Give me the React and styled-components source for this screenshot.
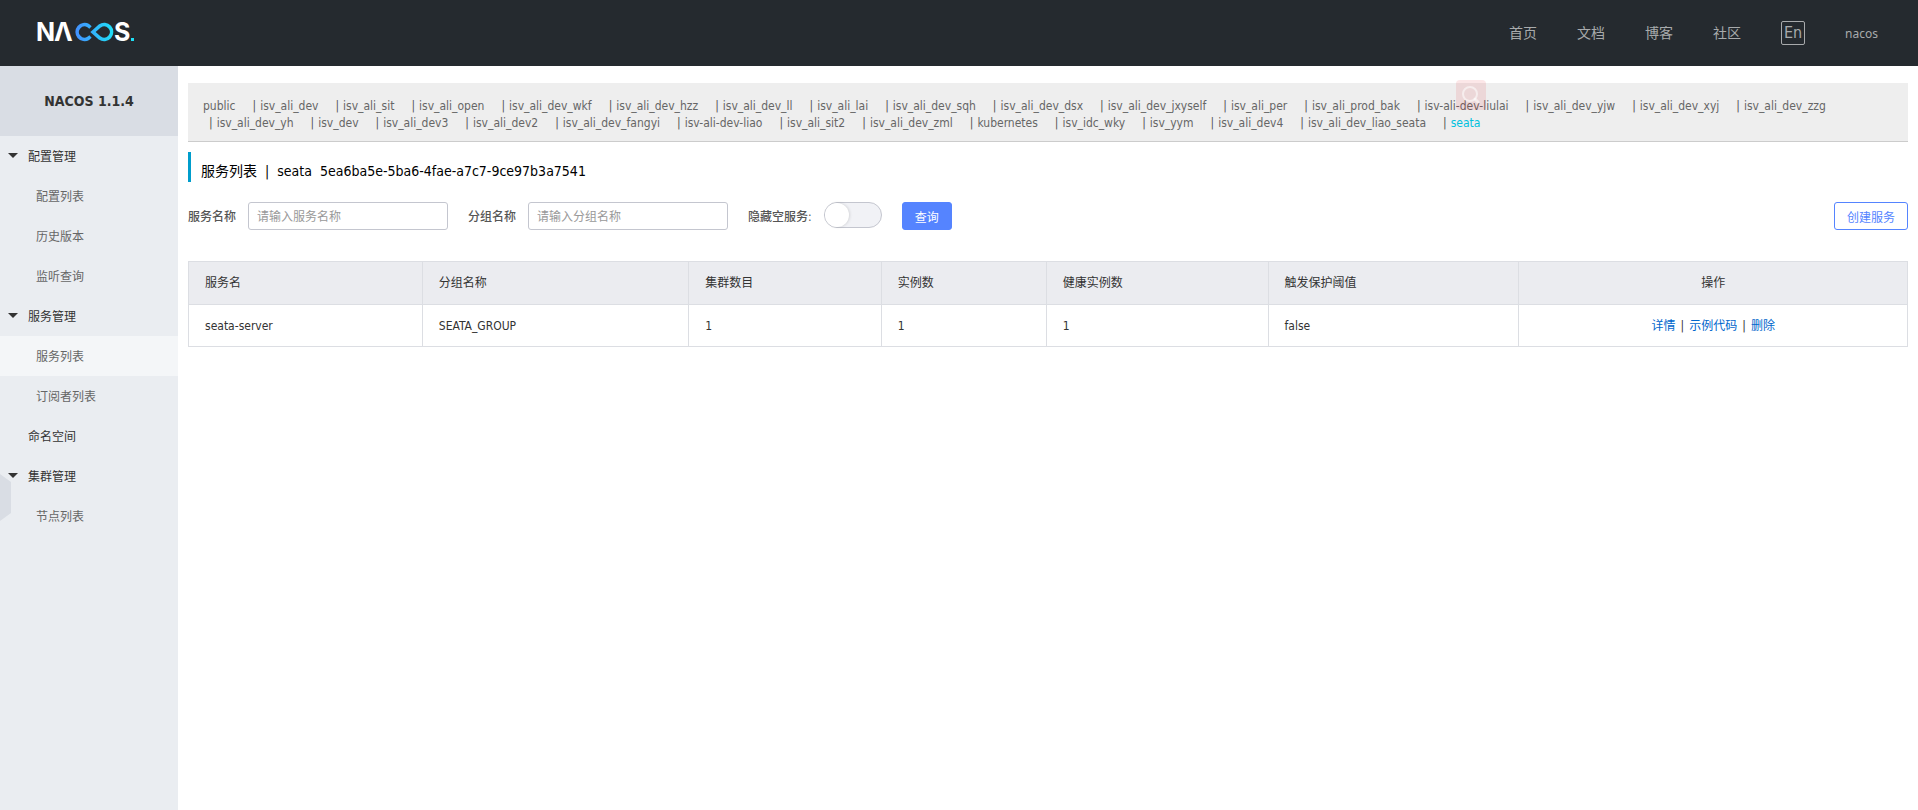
import React, { useState } from 'react'
import styled, { createGlobalStyle } from 'styled-components'

const GlobalStyle = createGlobalStyle`
  * {
    box-sizing: border-box;
  }
  body {
    margin: 0;
    background: #fff;
    color: #333;
    font-family: "DejaVu Sans Condensed", "Noto Sans CJK SC", sans-serif;
    font-size: 12px;
    line-height: 18px;
  }
  a {
    text-decoration: none;
  }
  button, input {
    font-family: inherit;
    font-size: 12px;
  }
`

const Page = styled.div`
  min-height: 100vh;
  display: flex;
  flex-direction: column;
`

const Header = styled.header`
  height: 66px;
  background: #252a2f;
  display: flex;
  align-items: center;
  justify-content: space-between;
  padding: 0 20px 0 32px;
`

const LogoLink = styled.a`
  display: block;
  svg {
    display: block;
  }
  text {
    font-family: Inter, sans-serif;
    font-size: 25px;
    font-weight: 700;
    fill: #fff;
  }
`

const TopNav = styled.nav`
  display: flex;
  align-items: center;
`

const TopLink = styled.a`
  padding: 0 20px;
  font-family: "Noto Sans", "Noto Sans CJK SC", sans-serif;
  font-size: ${p => (p.$small ? 12 : 14)}px;
  line-height: ${p => (p.$small ? 18 : 20)}px;
  padding-top: ${p => (p.$small ? 2 : 0)}px;
  color: #a8aaac;
`

const LangButton = styled.button`
  width: 24px;
  height: 24px;
  margin: 0 20px;
  padding: 0;
  border: 1px solid #a8aaac;
  border-radius: 2px;
  background: none;
  color: #a8aaac;
  font-size: 16px;
  line-height: 20px;
`

const Body = styled.div`
  flex: 1;
  display: flex;
`

const Sidebar = styled.aside`
  position: relative;
  flex: 0 0 178px;
  background: #eaedf1;
`

const Version = styled.h1`
  margin: 0;
  background: #d9dde4;
  font-size: 14px;
  line-height: 70px;
  text-align: center;
`

const Menu = styled.ul`
  list-style: none;
  margin: 0;
  padding: 0;
`

const MenuGroup = styled.button`
  display: flex;
  align-items: center;
  gap: 10px;
  width: 100%;
  height: 40px;
  padding: 0 8px 2px;
  border: 0;
  background: none;
  color: #333;
  text-align: left;
  &::before {
    content: '';
    border: 5px solid transparent;
    border-bottom-width: 0;
    border-top-color: ${p => (p.$leaf ? 'transparent' : '#333')};
  }
`

const MenuLink = styled.a`
  display: block;
  height: 40px;
  padding-left: 36px;
  line-height: 42px;
  color: #666;
  background: ${p => (p.$active ? '#f4f6f8' : 'transparent')};
`

// tab hanging on the window edge that folds the sidebar
const FoldHandle = styled.button`
  position: absolute;
  left: 0;
  top: 408px;
  width: 11px;
  height: 47px;
  padding: 0;
  border: 0;
  background: #d9dde4;
  clip-path: polygon(0 0, 100% 8px, 100% 39px, 0 100%);
`

const Main = styled.main`
  flex: 1;
  min-width: 0;
  padding: 17px 10px;
`

const Namespaces = styled.nav`
  position: relative;
  display: flex;
  flex-wrap: wrap;
  padding: 15px 15px 9px;
  background: #eee;
  border-bottom: 1px solid #ccc;
  line-height: 17px;
`

const Namespace = styled.span`
  margin-right: 11px;
  color: #555;
  white-space: nowrap;
  a {
    color: ${p => (p.$active ? '#00c1de' : '#666')};
  }
`

const Bar = styled.span`
  padding: 0 4px 0 6px;
`

const SearchBadge = styled.div`
  position: absolute;
  top: -3px;
  right: 422px;
  width: 30px;
  height: 30px;
  border-radius: 4px;
  background: rgba(230, 20, 30, 0.1);
  pointer-events: none;
`

const Title = styled.h2`
  display: flex;
  gap: 8px;
  margin: 10px 0 20px;
  padding: 8px 0 0 10px;
  border-left: 3px solid #009dcc;
  color: #000;
  font-size: 14px;
  font-weight: normal;
  line-height: 22px;
`

const Form = styled.form`
  display: flex;
  gap: 20px;
  margin-bottom: 31px;
`

const Field = styled.div`
  display: flex;
  gap: 12px;
  height: 28px;
  line-height: 30px;
  label {
    color: #555;
    font-weight: 500;
  }
`

const TextInput = styled.input`
  width: 200px;
  height: 28px;
  padding: 2px 8px 0;
  border: 1px solid #c4c6cf;
  border-radius: 3px;
  color: #333;
  &::placeholder {
    color: #999;
  }
`

const Switch = styled.input`
  appearance: none;
  width: 58px;
  height: 26px;
  margin: 0;
  border: 1px solid #c4c6cf;
  border-radius: 13px;
  background: ${p => (p.checked ? '#5584ff' : '#f1f2f6')};
  &::before {
    content: '';
    display: block;
    width: 24px;
    height: 24px;
    margin-left: ${p => (p.checked ? 32 : 0)}px;
    border-radius: 50%;
    background: #fff;
    box-shadow: 1px 0 3px rgba(0, 0, 0, 0.12);
  }
`

const Button = styled.button`
  height: 28px;
  padding: 0 12px;
  border: 1px solid #5584ff;
  border-radius: 3px;
  background: ${p => (p.$primary ? '#5584ff' : '#fff')};
  color: ${p => (p.$primary ? '#fff' : '#5584ff')};
`

const CreateButton = styled(Button)`
  margin-left: auto;
`

const Table = styled.table`
  width: 100%;
  table-layout: fixed;
  border-collapse: collapse;
  th, td {
    padding: 12px 16px;
    border: 1px solid #dcdee3;
    text-align: left;
    font-weight: normal;
  }
  th {
    background: #ebecf0;
  }
  td {
    padding-bottom: 11px;
  }
  th:last-child, td:last-child {
    text-align: center;
  }
  td a {
    color: #06c;
  }
`

const Col = styled.col`
  width: ${p => p.$width};
`

const Divider = styled.span`
  margin: 0 5px;
`

const menu = [
  { name: '配置管理', children: ['配置列表', '历史版本', '监听查询'] },
  { name: '服务管理', children: ['服务列表', '订阅者列表'] },
  { name: '命名空间', children: [] },
  { name: '集群管理', children: ['节点列表'] },
]

const namespaces = [
  'public', 'isv_ali_dev', 'isv_ali_sit', 'isv_ali_open', 'isv_ali_dev_wkf', 'isv_ali_dev_hzz',
  'isv_ali_dev_ll', 'isv_ali_lai', 'isv_ali_dev_sqh', 'isv_ali_dev_dsx', 'isv_ali_dev_jxyself',
  'isv_ali_per', 'isv_ali_prod_bak', 'isv-ali-dev-liulai', 'isv_ali_dev_yjw', 'isv_ali_dev_xyj',
  'isv_ali_dev_zzg', 'isv_ali_dev_yh', 'isv_dev', 'isv_ali_dev3', 'isv_ali_dev2',
  'isv_ali_dev_fangyi', 'isv-ali-dev-liao', 'isv_ali_sit2', 'isv_ali_dev_zml', 'kubernetes',
  'isv_idc_wky', 'isv_yym', 'isv_ali_dev4', 'isv_ali_dev_liao_seata', 'seata',
]

const columns = [
  { title: '服务名', width: '13.6%' },
  { title: '分组名称', width: '15.5%' },
  { title: '集群数目', width: '11.2%' },
  { title: '实例数', width: '9.6%' },
  { title: '健康实例数', width: '12.9%' },
  { title: '触发保护阈值', width: '14.6%' },
  { title: '操作', width: '22.6%' },
]

const services = [
  { name: 'seata-server', group: 'SEATA_GROUP', clusters: 1, instances: 1, healthy: 1, protect: 'false' },
]

const Logo = () => (
  <LogoLink href="#" aria-label="NACOS">
    <svg width="108" height="40" viewBox="0 0 108 40">
      <defs>
        <linearGradient id="loop" gradientUnits="userSpaceOnUse" x1="41" y1="0" x2="82" y2="0">
          <stop offset="0" stopColor="#468bff" />
          <stop offset="1" stopColor="#1ee0f7" />
        </linearGradient>
      </defs>
      <text x="4" y="28">N</text>
      <text x="22" y="28">Λ</text>
      <g fill="none" stroke="url(#loop)" strokeWidth="3.6">
        <path d="M58.5 14.5 L56.3 12.6 A7.4 7.4 0 1 0 56.3 25.4 L58.5 23.5" />
        <path d="M61 19 L67.8 13 A7.4 7.4 0 1 1 67.8 25 Z" />
      </g>
      <text x="82" y="28">S</text>
      <rect x="99" y="25" width="3" height="3" fill="#1ee0f7" />
    </svg>
  </LogoLink>
)

const SideMenu = () => (
  <Sidebar>
    <Version>NACOS 1.1.4</Version>
    <Menu>
      {menu.map(group => (
        <li key={group.name}>
          <MenuGroup type="button" $leaf={!group.children.length}>{group.name}</MenuGroup>
          {group.children.map(item => (
            <MenuLink key={item} href="#" $active={item === '服务列表'}>{item}</MenuLink>
          ))}
        </li>
      ))}
    </Menu>
    <FoldHandle type="button" aria-label="收起菜单" />
  </Sidebar>
)

const NamespaceList = () => (
  <Namespaces>
    {namespaces.map((name, i) => (
      <Namespace key={name} $active={name === 'seata'}>
        {i > 0 && <Bar>|</Bar>}
        <a href="#">{name}</a>
      </Namespace>
    ))}
    <SearchBadge>
      <svg width="30" height="30" viewBox="0 0 30 30" fill="none" stroke="#fff" strokeOpacity="0.55" strokeWidth="2">
        <circle cx="14" cy="14" r="7" />
        <path d="M19 19 L22 22" strokeWidth="3" strokeLinecap="round" />
      </svg>
    </SearchBadge>
  </Namespaces>
)

const ServiceTable = () => (
  <Table>
    <colgroup>
      {columns.map(col => <Col key={col.title} $width={col.width} />)}
    </colgroup>
    <thead>
      <tr>
        {columns.map(col => <th key={col.title}>{col.title}</th>)}
      </tr>
    </thead>
    <tbody>
      {services.map(service => (
        <tr key={service.name}>
          <td>{service.name}</td>
          <td>{service.group}</td>
          <td>{service.clusters}</td>
          <td>{service.instances}</td>
          <td>{service.healthy}</td>
          <td>{service.protect}</td>
          <td>
            <a href="#">详情</a>
            <Divider>|</Divider>
            <a href="#">示例代码</a>
            <Divider>|</Divider>
            <a href="#">删除</a>
          </td>
        </tr>
      ))}
    </tbody>
  </Table>
)

const App = () => {
  const [hideEmpty, setHideEmpty] = useState(false)

  return (
    <Page>
      <GlobalStyle />
      <Header>
        <Logo />
        <TopNav>
          <TopLink href="#">首页</TopLink>
          <TopLink href="#">文档</TopLink>
          <TopLink href="#">博客</TopLink>
          <TopLink href="#">社区</TopLink>
          <LangButton type="button">En</LangButton>
          <TopLink href="#" $small>nacos</TopLink>
        </TopNav>
      </Header>
      <Body>
        <SideMenu />
        <Main>
          <NamespaceList />
          <Title>
            <span>服务列表</span>
            <span>|</span>
            <span>seata</span>
            <span>5ea6ba5e-5ba6-4fae-a7c7-9ce97b3a7541</span>
          </Title>
          <Form onSubmit={e => e.preventDefault()}>
            <Field>
              <label htmlFor="serviceName">服务名称</label>
              <TextInput id="serviceName" placeholder="请输入服务名称" />
            </Field>
            <Field>
              <label htmlFor="groupName">分组名称</label>
              <TextInput id="groupName" placeholder="请输入分组名称" />
            </Field>
            <Field>
              <label htmlFor="hideEmpty">隐藏空服务:</label>
              <Switch
                id="hideEmpty"
                type="checkbox"
                role="switch"
                checked={hideEmpty}
                onChange={e => setHideEmpty(e.target.checked)}
              />
            </Field>
            <Button type="submit" $primary>查询</Button>
            <CreateButton type="button">创建服务</CreateButton>
          </Form>
          <ServiceTable />
        </Main>
      </Body>
    </Page>
  )
}

export default App
